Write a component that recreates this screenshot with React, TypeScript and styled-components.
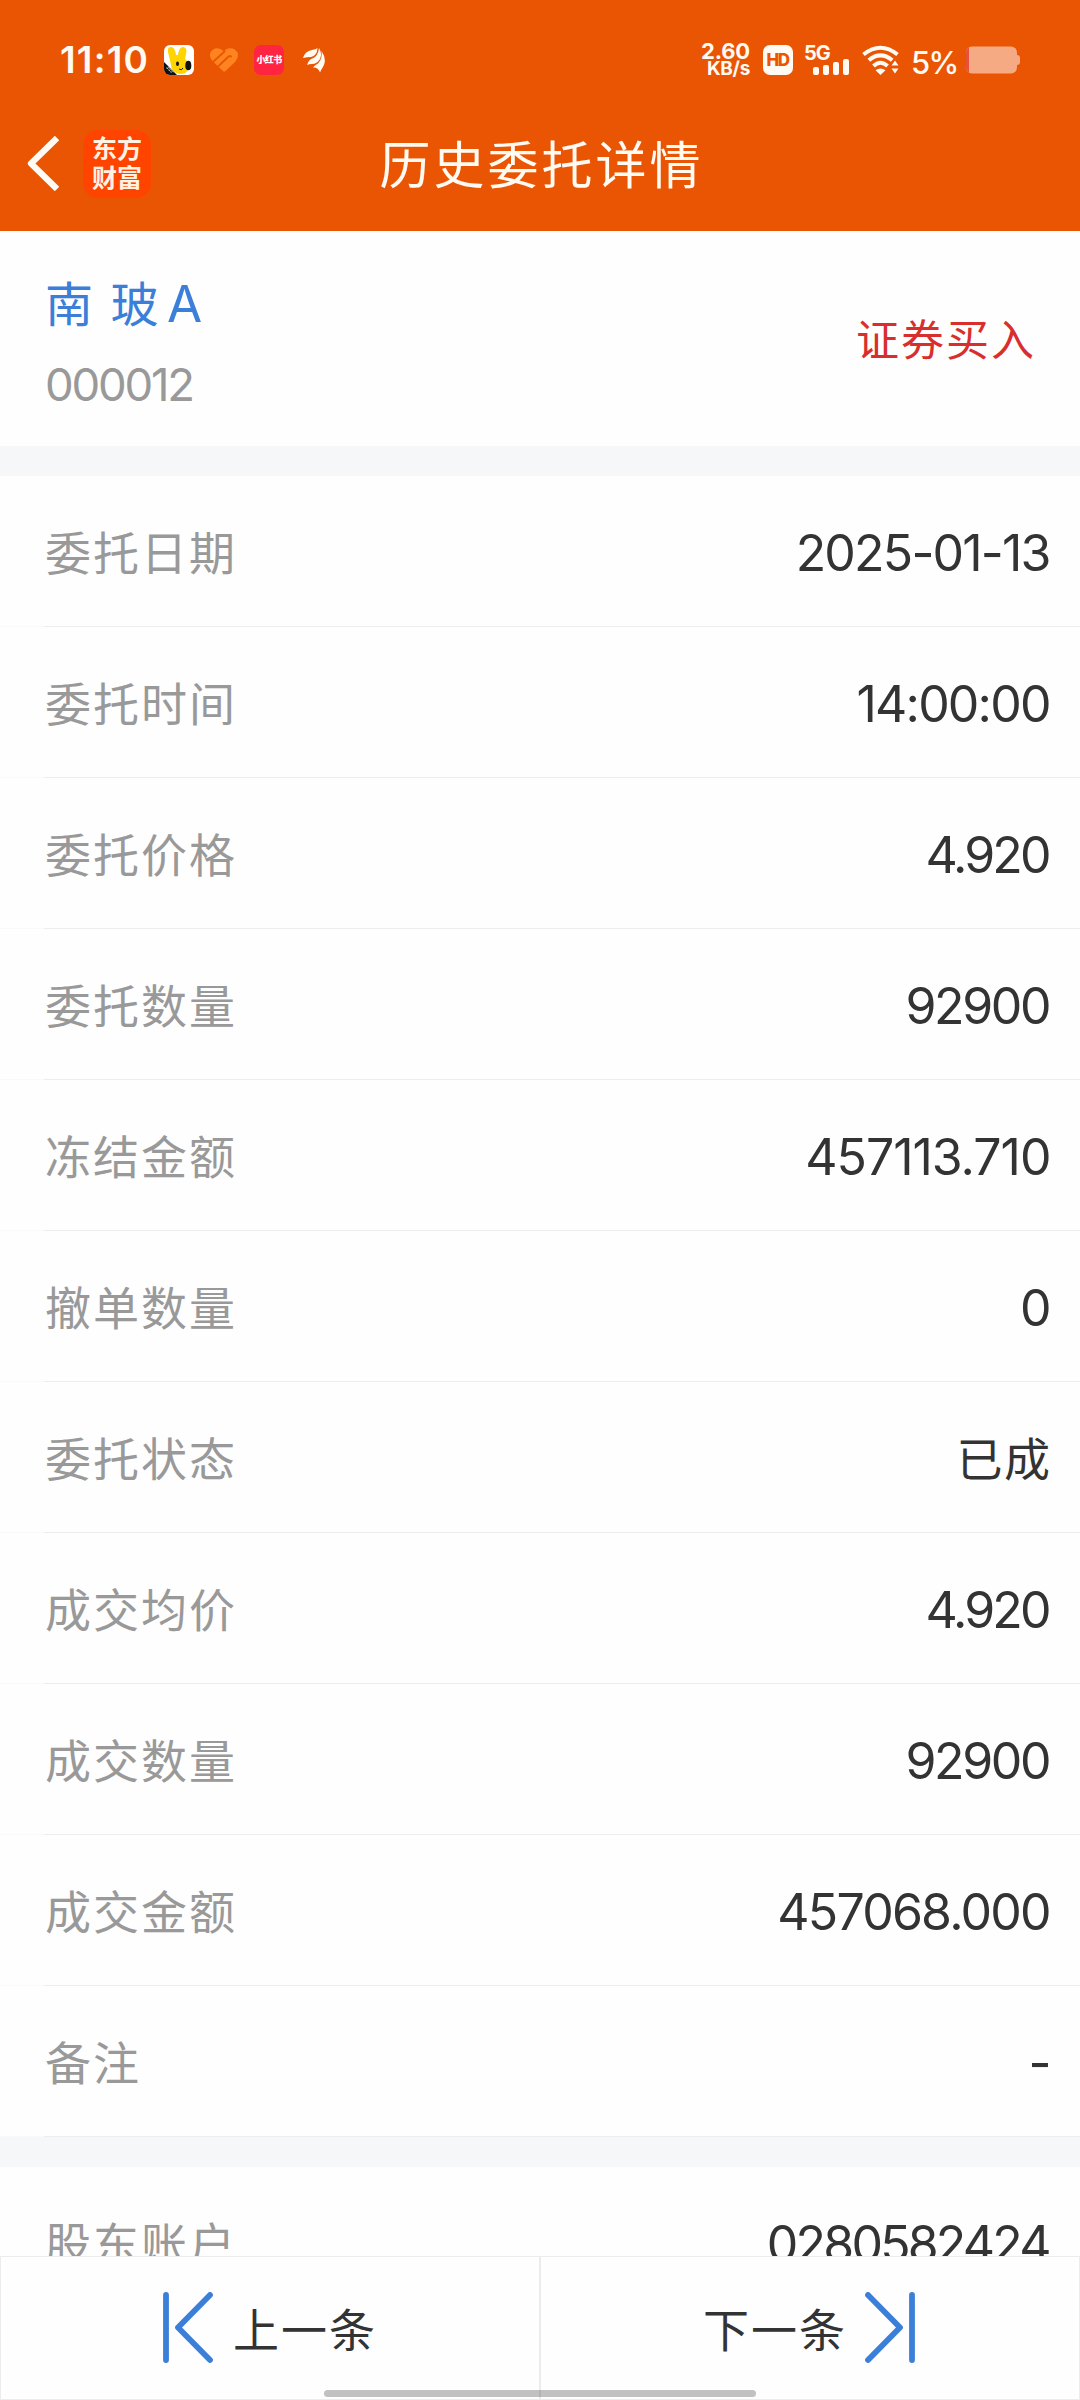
import React from "react";
import styled, { createGlobalStyle } from "styled-components";

const GlobalStyle = createGlobalStyle`
  * { box-sizing: border-box; }
  body { margin: 0; background: #fefefe; }
`;

const Screen = styled.div`
  width: 1080px;
  height: 2400px;
  display: flex;
  flex-direction: column;
  overflow: hidden;
  position: relative;
  background: #fefefe;
  color: #333;
  font-family: Inter, "Noto Sans CJK SC", sans-serif;
`;

const Top = styled.header`
  height: 231px;
  flex: none;
  background: #ea5504;
  color: #fffaf2;
`;

const StatusBar = styled.div`
  height: 120px;
  padding: 0 60px 0 60px;
  display: flex;
  align-items: center;
  justify-content: space-between;
`;

const StatusGroup = styled.div`
  display: flex;
  align-items: center;
  height: 34px;
`;

const Clock = styled.span`
  width: 104px;
  font-size: 37px;
  line-height: 34px;
  font-weight: 600;
  letter-spacing: 1.2px;
  white-space: nowrap;
`;

const Glyph = styled.svg<{ $gap?: number }>`
  display: block;
  flex: none;
  margin-left: ${(p) => p.$gap ?? 0}px;
`;

const RedApp = styled.span`
  width: 30px;
  height: 30px;
  margin-left: 16px;
  border-radius: 7px;
  background: #ff2442;
  color: #fff;
  font: 900 9px/30px "Noto Sans CJK SC", sans-serif;
  letter-spacing: -0.7px;
  text-align: center;
  white-space: nowrap;
`;

const Speed = styled.div`
  width: 48px;
  display: flex;
  flex-direction: column;
  align-items: flex-end;
  font-weight: 700;
`;

const SpeedLine = styled.span<{ $size: number; $track: number }>`
  font-size: ${(p) => p.$size}px;
  line-height: 18px;
  letter-spacing: ${(p) => p.$track}px;
  white-space: nowrap;
`;

const HdBadge = styled.span`
  width: 30px;
  height: 30px;
  margin-left: 13px;
  border-radius: 7px;
  background: #fffaf2;
  color: #ea5504;
  font-size: 17px;
  line-height: 30px;
  font-weight: 800;
  letter-spacing: -1.6px;
  text-indent: -1px;
  text-align: center;
`;

const Cellular = styled.div`
  width: 45px;
  height: 30px;
  margin-left: 11px;
  display: grid;
  grid-template-rows: 14px 16px;
  font-size: 20px;
  line-height: 16px;
  font-weight: 700;
  letter-spacing: -1px;
`;

const Bars = styled.svg`
  justify-self: end;
  display: block;
`;

const Percent = styled.span`
  width: 66px;
  padding-left: 11px;
  padding-top: 5px;
  font-size: 31px;
  line-height: 36px;
  font-weight: 500;
  letter-spacing: -1.6px;
  white-space: nowrap;
`;

const TitleBar = styled.div`
  height: 111px;
  padding: 0 27px;
  display: grid;
  grid-template-columns: 1fr auto 1fr;
  align-items: center;
`;

const BackArea = styled.div`
  display: flex;
  align-items: center;
  gap: 24px;
  padding-bottom: 24px;
`;

const BrandMark = styled.div`
  width: 68px;
  height: 68px;
  padding-top: 3px;
  border-radius: 15px;
  background: #ff4400;
  color: #fff2e2;
  font: 700 25px/29px "Noto Sans CJK SC", sans-serif;
  text-align: center;
`;

const Title = styled.h1`
  margin: 0 -3px 0 0;
  padding-bottom: 19px;
  font-size: 51px;
  line-height: 60px;
  font-weight: 400;
  letter-spacing: 3px;
`;

const Stock = styled.section`
  height: 215px;
  flex: none;
  padding: 38px 44px 0 45px;
  display: flex;
  justify-content: space-between;
`;

const StockName = styled.div`
  font-size: 48px;
  line-height: 70px;
  letter-spacing: 1.5px;
  word-spacing: 1px;
  color: #3b7fd9;
`;

const ShareClass = styled.span`
  margin-left: 7px;
  font-size: 51px;
`;

const StockCode = styled.div`
  margin-top: 10px;
  font-size: 45.5px;
  line-height: 70px;
  font-weight: 400;
  letter-spacing: -2.2px;
  color: #999;
`;

const Side = styled.div`
  margin-top: 38px;
  height: 66px;
  font-size: 43px;
  line-height: 66px;
  letter-spacing: 2px;
  color: #d92e2e;
`;

const Band = styled.div`
  height: 30px;
  flex: none;
  background: #f6f7f9;
`;

const Details = styled.main`
  flex: 1;
  min-height: 0;
  overflow: hidden;
`;

const Row = styled.div`
  height: 151px;
  padding: 4px 30px 0 45px;
  display: flex;
  align-items: center;
  justify-content: space-between;
  border-bottom: 1px solid;
  border-image: linear-gradient(to right, #f9f9f9 45px, #ededed 45px) 1;
`;

const Label = styled.span`
  font-size: 46px;
  line-height: 70px;
  letter-spacing: 2px;
  color: #999;
`;

const Value = styled.span<{ $track: number }>`
  font-size: 50px;
  line-height: 70px;
  letter-spacing: ${(p) => p.$track}px;
  margin-right: ${(p) => -(p.$track + 1.5)}px;
`;

const StateValue = styled.span`
  font-size: 46px;
  line-height: 70px;
  letter-spacing: 1.5px;
  margin-right: -1.5px;
`;

const Pager = styled.nav`
  height: 144px;
  flex: none;
  display: grid;
  grid-template-columns: 1fr 1fr;
`;

const PagerButton = styled.button`
  display: flex;
  align-items: center;
  justify-content: center;
  gap: 20px;
  padding: 0 2px 2px 0;
  border: 1px solid #ececec;
  background: #fefefe;
  color: #333;
  font: 400 46px/70px "Noto Sans CJK SC", sans-serif;
  letter-spacing: 2px;
`;

const PagerText = styled.span`
  margin-right: -2px;
`;

const HomeIndicator = styled.div`
  position: absolute;
  left: 324px;
  bottom: 3px;
  width: 432px;
  height: 7px;
  border-radius: 4px;
  background: rgba(0, 0, 0, 0.24);
`;

type OrderRow = { label: string; value: string; track?: number; state?: boolean };

const orderRows: OrderRow[] = [
  { label: "委托日期", value: "2025-01-13", track: -1.8 },
  { label: "委托时间", value: "14:00:00", track: -1.8 },
  { label: "委托价格", value: "4.920", track: -2.9 },
  { label: "委托数量", value: "92900", track: -2.4 },
  { label: "冻结金额", value: "457113.710", track: -1 },
  { label: "撤单数量", value: "0" },
  { label: "委托状态", value: "已成", state: true },
  { label: "成交均价", value: "4.920", track: -2.9 },
  { label: "成交数量", value: "92900", track: -2.4 },
  { label: "成交金额", value: "457068.000", track: -1.8 },
  { label: "备注", value: "-" },
];

const RabbitIcon = () => (
  <Glyph width="30" height="30" viewBox="0 0 30 30">
    <defs>
      <clipPath id="rabbit"><rect width="30" height="30" rx="6" /></clipPath>
    </defs>
    <g clipPath="url(#rabbit)">
      <rect width="30" height="30" fill="#fff" />
      <path d="M4 7Q3 2 7 2Q11 2 12 10L14 10Q15 2 19 2Q24 3 22 9L21 14Q26 18 25 23Q23 29 16 29Q7 28 7 20Z" fill="#ffd400" />
      <ellipse cx="24.3" cy="20.5" rx="3" ry="4.8" fill="#111" />
      <ellipse cx="13.5" cy="18.7" rx="1.5" ry="2.2" fill="#111" />
      <path d="M15 24q3 2 4-1" stroke="#111" fill="none" strokeWidth="1" />
      <path d="M0 17L13 30H0Z" fill="#111" />
      <path d="M2.5 22.5l5 5M4.5 22l5 5" stroke="#bbb" strokeWidth="1.1" strokeDasharray="2 .8" />
    </g>
  </Glyph>
);

const HeartIcon = () => (
  <Glyph $gap={16} width="28" height="24" viewBox="0 0 28 24">
    <path d="M14 3.500Q10-.5 5 .5Q-.5 3 0 8Q.5 11 3 13.500L13 23Q14 24 15.500 23L25.500 13.500Q29 9 27.500 4.500Q24-1 18 .5Q16 1 14 3.500Z" fill="#ff8420" />
    <path d="M3.500 13.500L14.500 3.500M8.500 18L18.500 8.500Q20 7.500 21 8.500" stroke="#ea5504" strokeWidth="1.800" fill="none" strokeLinecap="round" />
  </Glyph>
);

const WingIcon = () => (
  <Glyph $gap={19} width="23" height="26" viewBox="0 0 23 26" fill="#fffaf2">
    <path d="M0 11Q2 4 9 3Q13 2.500 14.500 1Q14 9 8 10Q4 10 0 11Z" />
    <path d="M4 18Q6 12 10 11.300Q15 9 16 1Q19.500 7 17 12Q14 17 9 17Q6 17 4 18Z" />
    <path d="M10 20.500Q12 18 15 16.500Q19.500 12 18.500 4Q24 12 20.500 19Q18 23 17 25.500Q15 20 10 20.500Z" />
  </Glyph>
);

const WifiIcon = () => (
  <Glyph $gap={13} width="38" height="30" viewBox="0 0 38 30" fill="none" stroke="#fffaf2" strokeWidth="4">
    <path d="M1.500 9.500Q18.500 -4 35.500 9.500" />
    <path d="M6.800 15.300Q18.500 5.500 30.200 15.300" />
    <path d="M11.500 21Q18.500 14.500 25.500 21" />
    <path d="M13.500 25.300Q18.500 21.500 23.500 25.300L18.500 30Z" fill="#fffaf2" stroke="none" />
    <path d="M29.500 20.500L33 15.500L36.500 20.500ZM29.500 23.500L33 28.500L36.500 23.500Z" fill="#fffaf2" stroke="none" />
  </Glyph>
);

const BatteryIcon = () => (
  <Glyph width="54" height="28" viewBox="0 0 54 28">
    <defs>
      <clipPath id="cell"><rect y="0.500" width="51" height="27" rx="6" /></clipPath>
    </defs>
    <g clipPath="url(#cell)">
      <rect width="51" height="28" fill="#f6aa83" />
      <rect width="3" height="28" fill="#e8503a" />
    </g>
    <path d="M51 9q3 0 3 3v4q0 3-3 3z" fill="#f6aa83" />
  </Glyph>
);

const SkipIcon = ({ next }: { next?: boolean }) => (
  <Glyph width="50" height="71" viewBox="0 0 50 71" fill="none" stroke="#3b7fd9" strokeWidth="5.800" strokeLinecap="round" strokeLinejoin="round">
    <g transform={next ? "translate(50 0) scale(-1 1)" : undefined}>
      <path d="M3 3V68" />
      <path d="M47 3L15 35.500L47 68" />
    </g>
  </Glyph>
);

export default function App() {
  return (
    <Screen>
      <GlobalStyle />
      <Top>
        <StatusBar>
          <StatusGroup>
            <Clock>11:10</Clock>
            <RabbitIcon />
            <HeartIcon />
            <RedApp>小红书</RedApp>
            <WingIcon />
          </StatusGroup>
          <StatusGroup>
            <Speed>
              <SpeedLine $size={22} $track={-0.2}>2.60</SpeedLine>
              <SpeedLine $size={19} $track={-0.3}>KB/s</SpeedLine>
            </Speed>
            <HdBadge>HD</HdBadge>
            <Cellular>
              <span>5G</span>
              <Bars width="36" height="16" viewBox="0 0 36 16" fill="#fffaf2">
                <rect x="0" y="8" width="6" height="8" rx="2" />
                <rect x="10" y="6" width="6" height="10" rx="2" />
                <rect x="20" y="3" width="6" height="13" rx="2" />
                <rect x="30" y="0" width="6" height="16" rx="2" />
              </Bars>
            </Cellular>
            <WifiIcon />
            <Percent>5%</Percent>
            <BatteryIcon />
          </StatusGroup>
        </StatusBar>
        <TitleBar>
          <BackArea>
            <svg width="32" height="55" viewBox="0 0 32 55" fill="none" stroke="#fffaf2" strokeWidth="6.200" strokeLinejoin="round">
              <path d="M30 2L4 27.500L30 53" />
            </svg>
            <BrandMark>东方<br />财富</BrandMark>
          </BackArea>
          <Title>历史委托详情</Title>
        </TitleBar>
      </Top>
      <Stock>
        <div>
          <StockName>南 玻<ShareClass>A</ShareClass></StockName>
          <StockCode>000012</StockCode>
        </div>
        <Side>证券买入</Side>
      </Stock>
      <Band />
      <Details>
        {orderRows.map((row) => (
          <Row key={row.label}>
            <Label>{row.label}</Label>
            {row.state ? (
              <StateValue>{row.value}</StateValue>
            ) : (
              <Value $track={row.track ?? -2}>{row.value}</Value>
            )}
          </Row>
        ))}
        <Band />
        <Row>
          <Label>股东账户</Label>
          <Value $track={-2.8}>0280582424</Value>
        </Row>
      </Details>
      <Pager>
        <PagerButton>
          <SkipIcon />
          <PagerText>上一条</PagerText>
        </PagerButton>
        <PagerButton>
          <PagerText>下一条</PagerText>
          <SkipIcon next />
        </PagerButton>
      </Pager>
      <HomeIndicator />
    </Screen>
  );
}
